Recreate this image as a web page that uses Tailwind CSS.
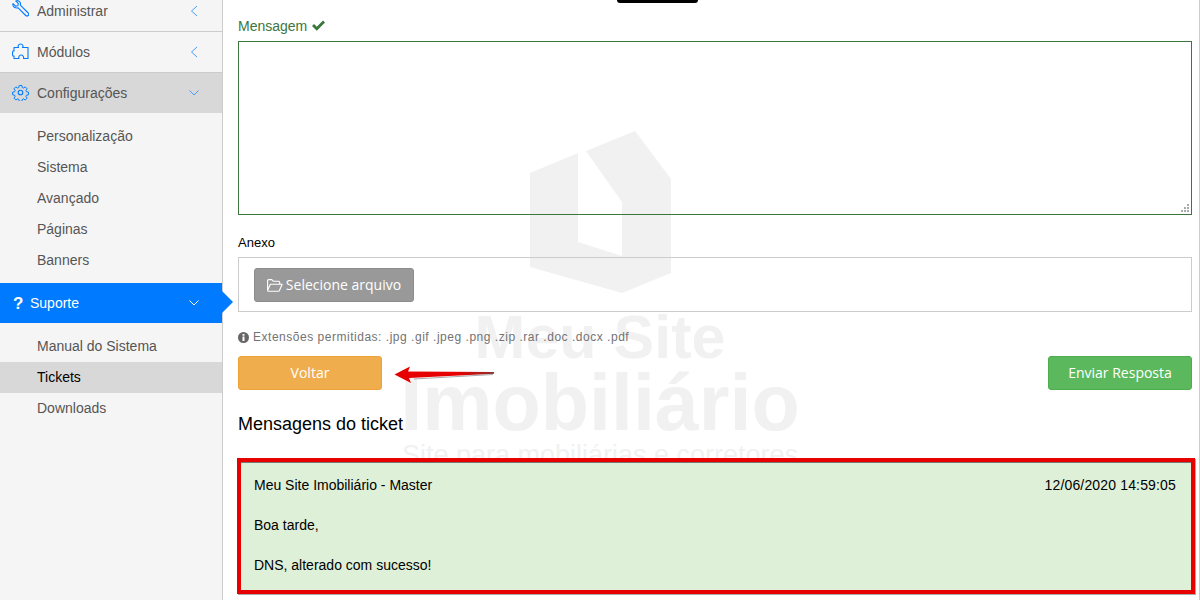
<!DOCTYPE html>
<html lang="pt-BR">
<head>
  <meta charset="UTF-8">
  <title>Tickets - Meu Site Imobiliário</title>
  <script src="https://cdn.jsdelivr.net/npm/@tailwindcss/browser@4"></script>
</head>
<body class="bg-white font-['Liberation_Sans',sans-serif] text-sm">
  <div class="flex h-[600px] overflow-hidden">
    <!-- Sidebar -->
    <aside class="relative w-[223px] shrink-0 bg-[#f5f5f5] border-r border-[#ccc] text-[#555]">
      <div class="-mt-[9px]">
        <a class="flex items-center h-[41px] pl-[12px] pr-[24px] border-b border-[#ccc]">
          <svg class="w-[17px] h-[17px] mr-2 -mt-[6px] text-[#007bff]" viewBox="0 0 17 17" fill="none" stroke="currentColor" stroke-width="1.1" stroke-linejoin="round"><path d="M1 3.6 3.6 6.1 5.9 5.7 6.3 3.4 3.8 1C5.8.1 8 1 8.4 3c.2.8.1 1.5-.1 2.1l7.9 7.9c.7.8.7 1.8 0 2.5-.7.7-1.8.7-2.5 0L5.9 7.7c-.7.3-1.5.3-2.3.1C1.600 7.300.5 5.500 1 3.600Z"/></svg>
          <span>Administrar</span>
          <svg class="ml-auto w-[8px] h-[12px] text-[#4a9eff]" viewBox="0 0 8 12" fill="none" stroke="currentColor"><path d="M7 1 1.500 6 7 11"/></svg>
        </a>
        <a class="flex items-center h-[41px] pl-[12px] pr-[24px] border-b border-[#ccc]">
          <svg class="w-[17px] h-[17px] mr-2 -mt-[2px] text-[#007bff]" viewBox="0 0 17 17" fill="none" stroke="currentColor" stroke-width="1.1" stroke-linejoin="round"><path d="M2 15.500V13C.8 13.300.5 12.500.5 10.500S1 7.500 2 8V4.500H6.500C5.800 3.500 6 1 8.500 1s3 2.500 2 3.500H16V15.500H11.500C12 14 11 12 9 12S6.500 14 7 15.500Z"/></svg>
          <span>Módulos</span>
          <svg class="ml-auto w-[8px] h-[12px] text-[#4a9eff]" viewBox="0 0 8 12" fill="none" stroke="currentColor"><path d="M7 1 1.500 6 7 11"/></svg>
        </a>
        <a class="flex items-center h-[40px] pl-[12px] pr-[23px] bg-[#d8d8d8]">
          <svg class="w-[17px] h-[17px] mr-2 -mt-[2px] text-[#007bff]" viewBox="0 0 17 17" fill="none" stroke="currentColor" stroke-width="1.1" stroke-linejoin="round"><path d="M7 .7h3l.4 2.200 1.400.6 1.900-1.300 2.100 2.100-1.300 1.900.6 1.400 2.200.4v3l-2.200.4-.6 1.400 1.300 1.900-2.100 2.100-1.900-1.300-1.400.6-.4 2.200H7l-.4-2.200-1.400-.6-1.900 1.300-2.100-2.100 1.300-1.900-.6-1.400-2.200-.4v-3l2.200-.4.6-1.400L1.200 4.300l2.100-2.100 1.900 1.300 1.400-.6Z" transform="translate(.9 .9) scale(.9)"/><circle cx="8.500" cy="8.500" r="2.300"/></svg>
          <span>Configurações</span>
          <svg class="ml-auto w-[10px] h-[6px] text-[#4a9eff]" viewBox="0 0 10 6" fill="none" stroke="currentColor"><path d="M.5.5 5 5 9.500.5"/></svg>
        </a>
      </div>
      <ul class="pt-2 pb-[7px]">
        <li class="h-[31px] leading-[31px] pl-[37px]">Personalização</li>
        <li class="h-[31px] leading-[31px] pl-[37px]">Sistema</li>
        <li class="h-[31px] leading-[31px] pl-[37px]">Avançado</li>
        <li class="h-[31px] leading-[31px] pl-[37px]">Páginas</li>
        <li class="h-[31px] leading-[31px] pl-[37px]">Banners</li>
      </ul>
      <a class="relative flex items-center h-[40px] pl-[13px] pr-[23px] bg-[#007bff] text-white">
        <span class="w-[17px] font-bold text-[17px] leading-none">?</span>
        <span>Suporte</span>
        <svg class="ml-auto w-[10px] h-[6px]" viewBox="0 0 10 6" fill="none" stroke="currentColor"><path d="M.5.5 5 5 9.500.5"/></svg>
        <span class="absolute left-[222px] top-[8px] w-0 h-0 border-y-[11px] border-y-transparent border-l-[11px] border-l-[#007bff]"></span>
      </a>
      <ul class="pt-2">
        <li class="h-[31px] leading-[31px] pl-[37px]">Manual do Sistema</li>
        <li class="h-[31px] leading-[31px] pl-[37px] bg-[#d8d8d8] text-black">Tickets</li>
        <li class="h-[31px] leading-[31px] pl-[37px]">Downloads</li>
      </ul>
    </aside>

    <!-- Main -->
    <main class="relative flex-1 pl-[15px] pr-[7px] border-r border-[#ccc]">
      <!-- Watermark -->
      <div class="absolute left-[177px] top-[131px] w-[400px] flex flex-col items-center text-[#f1f1f1] font-bold">
        <svg class="w-[141px] h-[162px]" viewBox="530 131 141 162" fill="currentColor"><polygon points="530,173 578,153 578,242 622,256 622,202 586,151 635,131 671,179 671,273 622,293 530,267"/></svg>
        <div class="mt-[14px] text-[61px] leading-[60px] whitespace-nowrap">Meu Site</div>
        <div class="text-[79px] leading-[72px] whitespace-nowrap">Imobiliário</div>
        <div class="mt-[2px] text-[27px] leading-[28px] font-normal whitespace-nowrap">Site para mobiliárias e corretores</div>
      </div>
      <div class="absolute left-[394px] top-0 w-[81px] h-[3px] bg-black rounded-b-[3px]"></div>

      <div class="relative">
        <label class="flex items-center gap-[5px] h-[41px] pt-[10px] text-[#3c763d]">
          Mensagem
          <svg class="w-[13px] h-[11px]" viewBox="0 0 13 11" fill="currentColor"><path d="M0 6 2 4 4.800 6.800 11 .5 13 2.500 4.800 10.700Z"/></svg>
        </label>
        <div class="relative">
          <textarea class="block w-full h-[174px] bg-transparent border border-[#3c763d] resize-none"></textarea>
          <svg class="absolute right-[3px] bottom-[3px] w-[8px] h-[8px]" viewBox="0 0 8 8" fill="#aaa"><path d="M6 0h2v2H6zM3 3h2v2H3zM6 3h2v2H6zM0 6h2v2H0zM3 6h2v2H3zM6 6h2v2H6z"/></svg>
        </div>
        <div class="mt-[20px] h-[16px] text-[13px] leading-[16px] text-black">Anexo</div>
        <div class="mt-[6px] h-[55px] border border-[#ccc] pt-[10px] pl-[15px]">
          <button class="flex items-center justify-center gap-[3px] w-[160px] h-[34px] bg-[#999] border border-[#8c8c8c] rounded-[3px] text-white font-['Open_Sans',sans-serif]">
            <svg class="w-[16px] h-[13px]" viewBox="0 0 16 13" fill="none" stroke="currentColor" stroke-width="1.100" stroke-linejoin="round"><path d="M.6 11.500V1.600c0-.5.4-1 1-1h3.200l1.400 1.600h5.500c.6 0 1 .4 1 1v1.600M.6 11.500l2.700-6.300h11.900l-2.800 6.300c-.1.500-.5.800-1 .8H1.500c-.6 0-.9-.3-.9-.8Z"/></svg>
            Selecione arquivo
          </button>
        </div>
        <p class="mt-[17px] h-[18px] flex items-center gap-[4px] text-[12px] tracking-[0.52px] text-[#737373]">
          <svg class="w-[11px] h-[11px] -mt-[1px]" viewBox="0 0 11 11"><circle cx="5.500" cy="5.500" r="5.500" fill="#666"/><rect x="4.500" y="4.500" width="2" height="4.500" fill="#fff"/><rect x="4.500" y="2" width="2" height="1.700" fill="#fff"/></svg>
          Extensões permitidas: .jpg .gif .jpeg .png .zip .rar .doc .docx .pdf
        </p>
        <div class="relative mt-[9px] flex justify-between">
          <button class="w-[144px] h-[34px] bg-[#f0ad4e] border border-[#eea236] rounded-[3px] text-white font-['Open_Sans',sans-serif]">Voltar</button>
          <button class="w-[144px] h-[34px] bg-[#5cb85c] border border-[#4cae4c] rounded-[3px] text-white font-['Open_Sans',sans-serif]">Enviar Resposta</button>
          <!-- Seta de anotação -->
          <svg class="absolute left-[156px] top-[6px] w-[102px] h-[24px]" viewBox="0 0 102 24"><defs><linearGradient id="seta" x1="0" x2="1"><stop offset="0" stop-color="#e60000"/><stop offset=".65" stop-color="#e60000"/><stop offset="1" stop-color="#8a3030"/></linearGradient></defs><path d="M20 17 99 12.500" stroke="#aaa" stroke-width="1"/><path d="M.5 12.500 16 4.500 14 9.500 100 10 100 11.800 15 16 17 21Z" fill="url(#seta)"/></svg>
        </div>
        <h2 class="mt-[22px] h-[24px] text-[18px] leading-[24px] text-black">Mensagens do ticket</h2>
        <!-- Mensagem -->
        <div class="relative mt-[26px] h-[128px] bg-[#dff0d8] text-black px-[16px] pt-[3px]">
          <div class="flex justify-between h-[40px] items-center"><span>Meu Site Imobiliário - Master</span><span class="tracking-[0.16px]">12/06/2020 14:59:05</span></div>
          <div class="h-[40px] flex items-center">Boa tarde,</div>
          <div class="h-[40px] flex items-center">DNS, alterado com sucesso!</div>
          <div class="absolute -left-[1px] -right-[3px] -top-[4px] -bottom-[4px] border-4 border-[#e60000] shadow-[inset_0_1px_0_#777,1px_1px_0_#aaa]"></div>
        </div>
      </div>
    </main>
  </div>
</body>
</html>
